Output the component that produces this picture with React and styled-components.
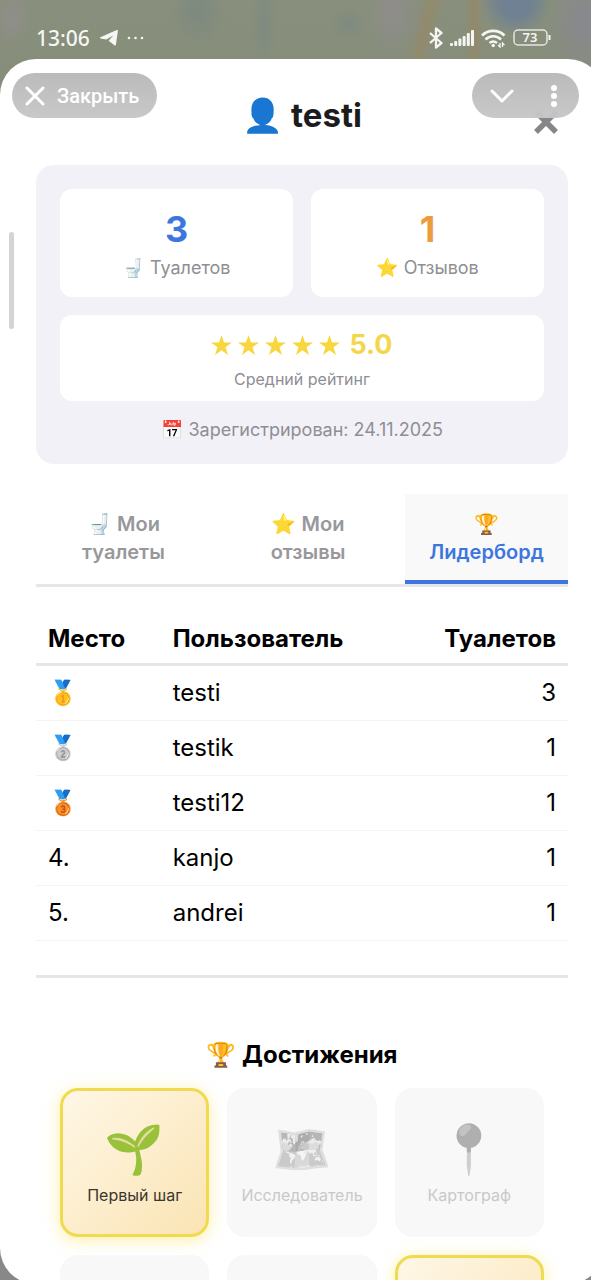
import React from "react";
import styled, { createGlobalStyle, css } from "styled-components";

const Global = createGlobalStyle`
  *, *::before, *::after { box-sizing: border-box; }
  body {
    margin: 0;
    background: #888888;
    color: #000;
    font-family: Inter, "Noto Sans", "Noto Color Emoji", sans-serif;
    overflow: hidden;
  }
  button { font: inherit; border: 0; margin: 0; padding: 0; background: none; cursor: pointer; }
  h1, h2, p { margin: 0; }
`;

const Screen = styled.div`
  position: relative;
  height: 100vh;
  overflow: hidden;
  background:
    radial-gradient(ellipse 36px 34px at 516px 2px, #6f8192 40%, transparent 100%),
    radial-gradient(ellipse 26px 50px at 394px 8px, #8f8d8c 10%, transparent 100%),
    radial-gradient(ellipse 36px 60px at 584px 20px, #88898c 20%, transparent 100%),
    radial-gradient(ellipse 28px 34px at 198px 12px, #7d8a80 10%, transparent 100%),
    radial-gradient(ellipse 14px 44px at 264px 24px, #7f8b80 10%, transparent 100%),
    radial-gradient(ellipse 20px 16px at 348px 24px, #7f8b80 10%, transparent 100%),
    radial-gradient(ellipse 20px 30px at 12px 18px, #8f8e89 10%, transparent 100%),
    linear-gradient(104deg, transparent 408px, #938a6c 420px, transparent 432px),
    linear-gradient(90deg, transparent 464px, #93896c 474px, transparent 484px),
    linear-gradient(#888f7c, #868c7a) 0 0 / 100% 120px no-repeat,
    #888888;
`;

const StatusBar = styled.header`
  display: flex;
  justify-content: space-between;
  align-items: center;
  height: 59px;
  padding: 16px 40px 0 36px;
  color: #f5f6f2;
`;

const StatusGroup = styled.div`
  display: flex;
  align-items: center;
  gap: ${(p) => p.$gap}px;
  svg { display: block; }
`;

const Clock = styled.time`
  font: 500 21px/24px "Noto Sans", sans-serif;
`;

const Sheet = styled.main`
  height: calc(100vh - 55px);
  margin-right: -13px;
  padding: 0 36px;
  overflow: hidden;
  background: #fff;
  border-radius: 36px;
`;

const Pill = styled.div`
  position: absolute;
  top: 73px;
  display: flex;
  align-items: center;
  height: 45px;
  border-radius: 23px;
  color: #fff;
  background: linear-gradient(rgba(184, 184, 184, 0.96), rgba(198, 198, 198, 0.96));
  svg { display: block; }
`;

const ClosePill = styled(Pill).attrs({ as: "button", type: "button" })`
  left: 12px;
  gap: 12px;
  padding: 0 18px 0 13px;
  font: 500 20px/24px Roboto, sans-serif;
`;

const MenuPill = styled(Pill)`
  right: 12px;
  width: 107px;
  justify-content: space-between;
  padding: 0 17px 0 18px;
`;

const ScrollMark = styled.div`
  position: absolute;
  left: 9px;
  top: 232px;
  width: 5px;
  height: 97px;
  border-radius: 3px;
  background: #d4d4d4;
`;

const TitleRow = styled.div`
  display: grid;
  grid-template-columns: 34px 1fr 34px;
  align-items: center;
  height: 106px;
  padding: 6px 0 0;
`;

const Title = styled.h1`
  grid-column: 2;
  text-align: center;
  font-size: 33px;
  line-height: 40px;
  font-weight: 700;
  color: #1c1c1e;
`;

const Dismiss = styled.button`
  justify-self: end;
  width: 44px;
  display: flex;
  justify-content: center;
  padding-top: 14px;
`;

const Stats = styled.section`
  display: grid;
  grid-template-columns: 1fr 1fr;
  gap: 18px;
  padding: 24px;
  border-radius: 18px;
  background: #f2f1f7;
`;

const StatCard = styled.div`
  display: flex;
  flex-direction: column;
  align-items: center;
  border-radius: 12px;
  background: #fff;
  color: #8e8e93;
  ${(p) =>
    p.$wide
      ? css`
          grid-column: 1 / -1;
          padding: 14px 12px 10px;
          gap: 6px;
          font-size: 16px;
          line-height: 24px;
        `
      : css`
          padding: 18px 12px 17px;
          gap: 5px;
          font-size: 18px;
          line-height: 24px;
        `}
`;

const StatValue = styled.strong`
  font-size: 36px;
  line-height: 44px;
  color: ${(p) => p.$color};
`;

const Rating = styled.div`
  display: flex;
  align-items: center;
  gap: 9px;
  font-size: 27px;
  line-height: 32px;
  font-weight: 700;
  color: #f4d64c;
`;

const Stars = styled.span`
  display: flex;
  gap: 6px;
`;

const Registered = styled.p`
  grid-column: 1 / -1;
  text-align: center;
  font-size: 18px;
  line-height: 21px;
  color: #8e8e93;
`;

const Tabs = styled.nav`
  display: grid;
  grid-template-columns: 175fr 194fr 163fr;
  margin-top: 30px;
  border-bottom: 3px solid #e5e5ea;
`;

const Tab = styled.button`
  padding: 16px 20px 14px;
  font-size: 20px;
  line-height: 28px;
  font-weight: 600;
  text-align: center;
  color: ${(p) => (p.$active ? "#3d76df" : "#98989c")};
  background: ${(p) => (p.$active ? "#f9f9f9" : "transparent")};
  border-bottom: 4px solid ${(p) => (p.$active ? "#3d76df" : "transparent")};
`;

const Board = styled.table`
  width: 100%;
  margin-top: 25px;
  border-spacing: 0;
  font-size: 24px;
  line-height: 30px;
`;

const HeadCell = styled.th`
  padding: 12px 12px 9px;
  text-align: ${(p) => p.$align || "left"};
  font-weight: 700;
  border-bottom: 3px solid #e5e5ea;
`;

const Cell = styled.td`
  height: 55px;
  padding: 12px;
  text-align: ${(p) => p.$align || "left"};
  border-bottom: 1px solid #f2f2f7;
`;

const Achievements = styled.section`
  margin-top: 34px;
  padding: 61px 24px 0;
  border-top: 3px solid #e5e5ea;
`;

const SectionTitle = styled.h2`
  text-align: center;
  font-size: 24px;
  line-height: 32px;
  font-weight: 700;
`;

const BadgeGrid = styled.div`
  display: grid;
  grid-template-columns: repeat(3, 1fr);
  gap: 18px;
  margin-top: 17px;
`;

const Badge = styled.div`
  display: flex;
  flex-direction: column;
  align-items: center;
  justify-content: center;
  aspect-ratio: 1;
  border-radius: 18px;
  font-size: 16px;
  line-height: 20px;
  padding-bottom: 2px;
  ${(p) =>
    p.$earned
      ? css`
          color: #3a3630;
          border: 3px solid #f0da50;
          background: linear-gradient(135deg, #fef7e6, #fbe4b4);
          box-shadow: 0 3px 16px rgba(250, 225, 80, 0.5);
        `
      : css`
          color: #c8c8ca;
          background: #f8f8f8;
        `}
`;

const BadgeIcon = styled.span`
  font-size: 48px;
  line-height: 60px;
  margin-bottom: 6px;
  ${(p) => p.$locked && "filter: grayscale(1); opacity: 0.5;"}
`;

const Star = () => (
  <svg width="21" height="21" viewBox="0 0 20 20" aria-hidden="true">
    <path fill="#f8d63c" d="M10 0l2.4 7.2H20l-6.2 4.5 2.4 7.3L10 14.5 3.8 19l2.4-7.3L0 7.2h7.6z" />
  </svg>
);

const places = [
  ["🥇", "testi", 3],
  ["🥈", "testik", 1],
  ["🥉", "testi12", 1],
  ["4.", "kanjo", 1],
  ["5.", "andrei", 1],
];

const badges = [
  { icon: "🌱", name: "Первый шаг", earned: true },
  { icon: "🗺️", name: "Исследователь" },
  { icon: "📍", name: "Картограф" },
  {},
  {},
  { earned: true },
];

export default function App() {
  return (
    <Screen>
      <Global />
      <StatusBar>
        <StatusGroup $gap={10}>
          <Clock>13:06</Clock>
          <svg width="46" height="18" viewBox="0 0 46 18" fill="currentColor">
            <path d="M.4 8.300L16.700 1c.8-.3 1.300.1 1.200.9l-2 13.800c-.1.900-.8 1.100-1.500.6L8.600 11.800l4.600-5.300L6.300 10.600.5 9.600c-.8-.2-.8-.9-.1-1.300z" />
            <circle cx="29" cy="9" r="1.300" />
            <circle cx="35.500" cy="9" r="1.300" />
            <circle cx="42" cy="9" r="1.300" />
          </svg>
        </StatusGroup>
        <StatusGroup $gap={7}>
          <svg width="14" height="22" viewBox="0 0 14 22" fill="none" stroke="currentColor" strokeWidth="2.300" strokeLinejoin="round">
            <path d="M1 6l11.500 10L7 20.500v-19L12.500 6 1 16" />
          </svg>
          <svg width="24" height="16" viewBox="0 0 24 16" fill="currentColor">
            <rect x="0" y="13" width="3" height="3" rx="1" />
            <rect x="4.200" y="11" width="3" height="5" rx="1" />
            <rect x="8.400" y="8.500" width="3" height="7.500" rx="1" />
            <rect x="12.600" y="6" width="3" height="10" rx="1" />
            <rect x="16.800" y="3" width="3" height="13" rx="1" />
            <rect x="21" y="0" width="3" height="16" rx="1" />
          </svg>
          <svg width="25" height="20" viewBox="0 0 25 20" fill="none" stroke="currentColor" strokeWidth="2.600">
            <path d="M1 7.500a16 16 0 0 1 22.500 0M4.500 11.500a11 11 0 0 1 15.500 0M8.500 15a6 6 0 0 1 7.500 0" />
            <circle cx="12.200" cy="17.500" r="1.700" fill="currentColor" stroke="none" />
            <path strokeWidth="1.300" d="M19 15v4l-2-2M21.500 19v-4l2 2" />
          </svg>
          <svg width="38" height="17" viewBox="0 0 38 17">
            <rect x="1" y="1" width="33" height="15" rx="4" fill="none" stroke="currentColor" strokeWidth="1.500" opacity="0.85" />
            <path d="M36.500 6v5" stroke="currentColor" strokeWidth="2" />
            <text x="17" y="13" textAnchor="middle" fontFamily="Noto Sans, sans-serif" fontSize="13" fontWeight="600" fill="currentColor">73</text>
          </svg>
        </StatusGroup>
      </StatusBar>

      <Sheet>
        <TitleRow>
          <Title>👤 testi</Title>
          <Dismiss type="button" aria-label="Закрыть профиль">
            <svg width="26" height="26" viewBox="0 0 26 26" stroke="#85868a" strokeWidth="5.500">
              <path d="M3 3l20 20M23 3L3 23" />
            </svg>
          </Dismiss>
        </TitleRow>

        <Stats>
          <StatCard>
            <StatValue $color="#3d76df">3</StatValue>
            <span>🚽 Туалетов</span>
          </StatCard>
          <StatCard>
            <StatValue $color="#ec9c3c">1</StatValue>
            <span>⭐ Отзывов</span>
          </StatCard>
          <StatCard $wide>
            <Rating>
              <Stars>
                <Star /><Star /><Star /><Star /><Star />
              </Stars>
              <span>5.0</span>
            </Rating>
            <span>Средний рейтинг</span>
          </StatCard>
          <Registered>📅 Зарегистрирован: 24.11.2025</Registered>
        </Stats>

        <Tabs>
          <Tab type="button">🚽 Мои<br />туалеты</Tab>
          <Tab type="button">⭐ Мои<br />отзывы</Tab>
          <Tab type="button" $active>🏆<br />Лидерборд</Tab>
        </Tabs>

        <Board>
          <thead>
            <tr>
              <HeadCell>Место</HeadCell>
              <HeadCell>Пользователь</HeadCell>
              <HeadCell $align="right">Туалетов</HeadCell>
            </tr>
          </thead>
          <tbody>
            {places.map(([place, user, count]) => (
              <tr key={user}>
                <Cell>{place}</Cell>
                <Cell>{user}</Cell>
                <Cell $align="right">{count}</Cell>
              </tr>
            ))}
          </tbody>
        </Board>

        <Achievements>
          <SectionTitle>🏆 Достижения</SectionTitle>
          <BadgeGrid>
            {badges.map((b, i) => (
              <Badge key={i} $earned={b.earned}>
                {b.name && (
                  <>
                    <BadgeIcon $locked={!b.earned}>{b.icon}</BadgeIcon>
                    <span>{b.name}</span>
                  </>
                )}
              </Badge>
            ))}
          </BadgeGrid>
        </Achievements>
      </Sheet>

      <ScrollMark />
      <ClosePill>
        <svg width="20" height="20" viewBox="0 0 20 20" stroke="currentColor" strokeWidth="3" strokeLinecap="round">
          <path d="M2 2l16 16M18 2L2 18" />
        </svg>
        Закрыть
      </ClosePill>
      <MenuPill>
        <button type="button" aria-label="Свернуть">
          <svg width="24" height="16" viewBox="0 0 24 16" fill="none" stroke="#fff" strokeWidth="3" strokeLinecap="round" strokeLinejoin="round">
            <path d="M2 3l10 10L22 3" />
          </svg>
        </button>
        <button type="button" aria-label="Меню">
          <svg width="16" height="24" viewBox="0 0 16 24" fill="#fff">
            <circle cx="8" cy="4" r="3" />
            <circle cx="8" cy="12" r="3" />
            <circle cx="8" cy="20" r="3" />
          </svg>
        </button>
      </MenuPill>
    </Screen>
  );
}
